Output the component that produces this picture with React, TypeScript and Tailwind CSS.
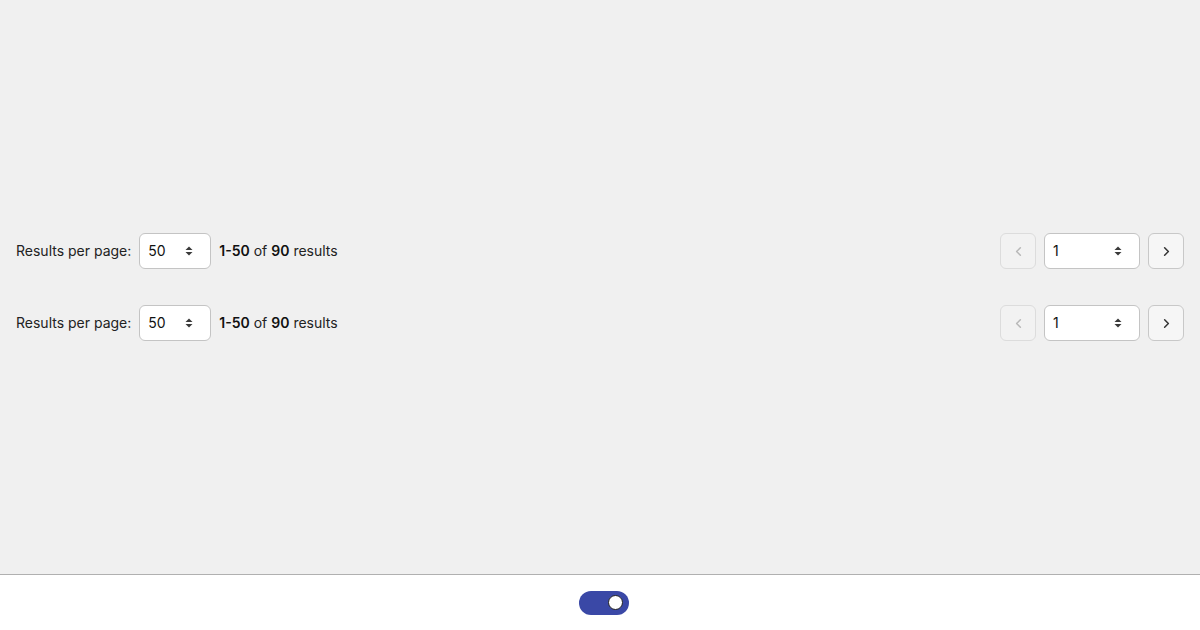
import React from "react";

function SortIcon() {
  return (
    <svg width="10" height="12" viewBox="0 0 10 12" className="text-[#3a3a3a]">
      <path d="M5 1.5 L8.5 5 H1.5 Z" fill="currentColor" />
      <path d="M5 10.5 L8.5 7 H1.5 Z" fill="currentColor" />
    </svg>
  );
}

function Select({ value, width }: { value: string; width: string }) {
  return (
    <div
      className={`${width} h-9 flex items-center justify-between rounded-md border border-[#c4c4c4] bg-white pl-2 pr-4 text-[14px] leading-none text-[#111]`}
    >
      <span className="-mt-px">{value}</span>
      <SortIcon />
    </div>
  );
}

function Chevron({ dir, color }: { dir: "left" | "right"; color: string }) {
  return (
    <svg width="15" height="15" viewBox="0 0 24 24" fill="none" stroke={color} strokeWidth="2.4" strokeLinecap="round" strokeLinejoin="round">
      {dir === "left" ? <path d="M15 6l-6 6 6 6" /> : <path d="M9 6l6 6-6 6" />}
    </svg>
  );
}

function Row() {
  return (
    <div className="flex items-center justify-between px-4">
      <div className="flex items-center gap-2 text-[14px] text-[#222]">
        <span className="-mt-px">Results per page:</span>
        <Select value="50" width="w-[72px]" />
        <span className="-mt-px">
          <b className="font-semibold text-[#111]">1-50</b> of <b className="font-semibold text-[#111]">90</b> results
        </span>
      </div>
      <div className="flex items-center gap-2">
        <div className="w-9 h-9 flex items-center justify-center rounded-md border border-[#dcdcdc] bg-[#f2f2f2]">
          <Chevron dir="left" color="#b8b8b8" />
        </div>
        <Select value="1" width="w-[96px]" />
        <div className="w-9 h-9 flex items-center justify-center rounded-md border border-[#c8c8c8] bg-[#f6f6f6]">
          <Chevron dir="right" color="#333" />
        </div>
      </div>
    </div>
  );
}

export default function App() {
  return (
    <div className="w-[1200px] h-[630px] flex flex-col bg-[#f0f0f0]" style={{ fontFamily: "Inter, 'Liberation Sans', sans-serif" }}>
      <div className="flex-1 flex flex-col justify-center gap-9">
        <Row />
        <Row />
      </div>
      <div className="h-[56px] bg-white border-t border-[#b0b0b0] flex items-center justify-center">
        <div className="ml-2 w-[50px] h-6 rounded-full bg-[#3a48a6] flex items-center justify-end pr-[6px]">
          <div className="w-[15px] h-[15px] rounded-full bg-white border border-[#222]" />
        </div>
      </div>
    </div>
  );
}
